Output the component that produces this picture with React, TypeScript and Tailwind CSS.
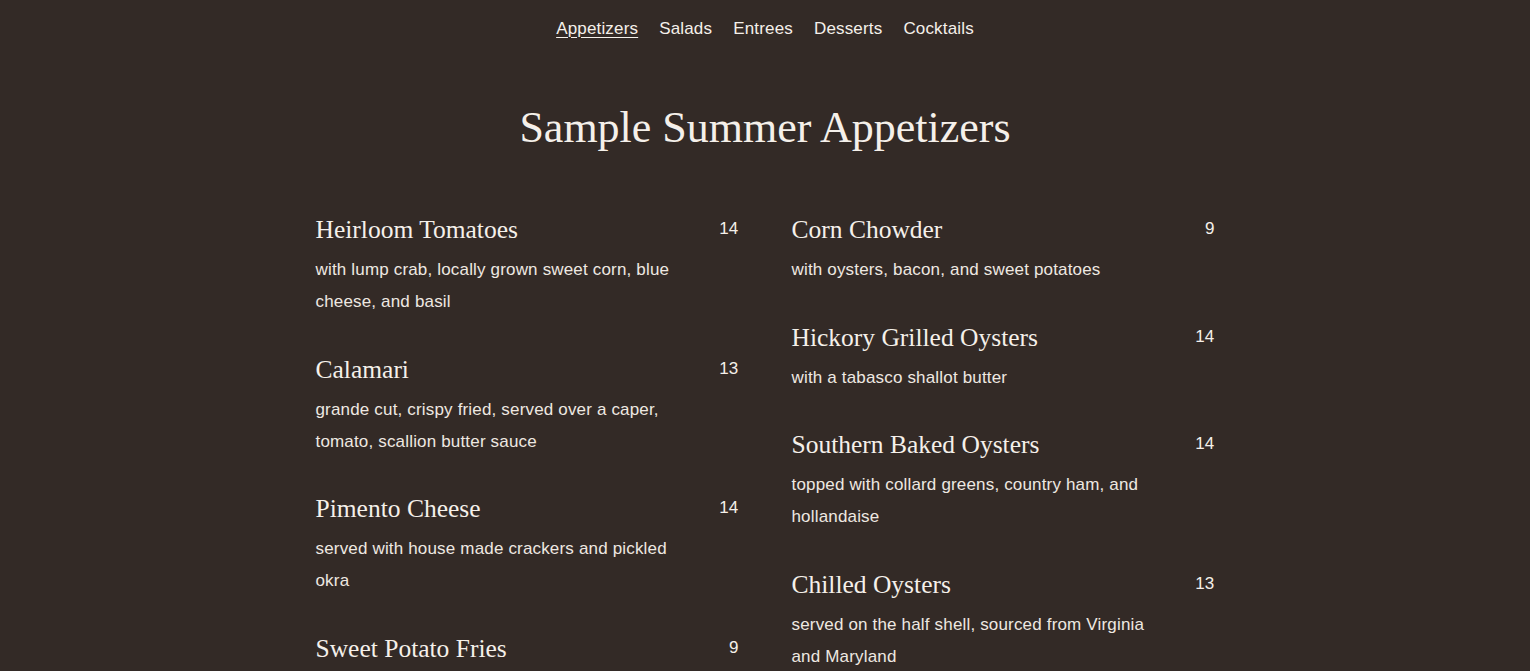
const sans = "font-['Liberation_Sans',Arial,sans-serif]";
const serif = "font-['Liberation_Serif','Times_New_Roman',serif]";

type Item = { name: string; price: number; desc: string };

const left: Item[] = [
  { name: 'Heirloom Tomatoes', price: 14, desc: 'with lump crab, locally grown sweet corn, blue cheese, and basil' },
  { name: 'Calamari', price: 13, desc: 'grande cut, crispy fried, served over a caper, tomato, scallion butter sauce' },
  { name: 'Pimento Cheese', price: 14, desc: 'served with house made crackers and pickled okra' },
  { name: 'Sweet Potato Fries', price: 9, desc: 'with cinnamon sugar and honey butter' },
];

const right: Item[] = [
  { name: 'Corn Chowder', price: 9, desc: 'with oysters, bacon, and sweet potatoes' },
  { name: 'Hickory Grilled Oysters', price: 14, desc: 'with a tabasco shallot butter' },
  { name: 'Southern Baked Oysters', price: 14, desc: 'topped with collard greens, country ham, and hollandaise' },
  { name: 'Chilled Oysters', price: 13, desc: 'served on the half shell, sourced from Virginia and Maryland' },
];

const tabs = ['Appetizers', 'Salads', 'Entrees', 'Desserts', 'Cocktails'];

function MenuItem({ item }: { item: Item }) {
  return (
    <div>
      <div className="flex items-start justify-between">
        <h3 className={`${serif} text-[25.5px] leading-[32px] text-[#f5f0ea]`}>{item.name}</h3>
        <span className={`${sans} text-[17px] leading-[30px] tracking-[0.01em] text-[#f5f0ea]`}>{item.price}</span>
      </div>
      <p className={`${sans} mt-2 max-w-[370px] text-[17px] leading-[32px] tracking-[0.01em] text-[#eee8e1]`}>
        {item.desc}
      </p>
    </div>
  );
}

export default function App() {
  return (
    <div className="min-h-screen bg-[#332a26] text-[#f5f0ea]">
      <nav className={`${sans} flex justify-center gap-[21px] pt-[17px] text-[17px] leading-6 tracking-[0.01em]`}>
        {tabs.map((t, i) => (
          <a key={t} href="#" className={i === 0 ? 'underline underline-offset-[3px] decoration-1' : ''}>
            {t}
          </a>
        ))}
      </nav>

      <h1 className={`${serif} mt-[59px] text-center text-[44px] leading-[56px]`}>Sample Summer Appetizers</h1>

      <div className="mx-auto mt-[58px] grid max-w-[899px] grid-cols-2 gap-x-[53px] pb-16">
        <div className="flex flex-col gap-[35.5px]">
          {left.map((it) => (
            <MenuItem key={it.name} item={it} />
          ))}
        </div>
        <div className="flex flex-col gap-[35.5px]">
          {right.map((it) => (
            <MenuItem key={it.name} item={it} />
          ))}
        </div>
      </div>
    </div>
  );
}
